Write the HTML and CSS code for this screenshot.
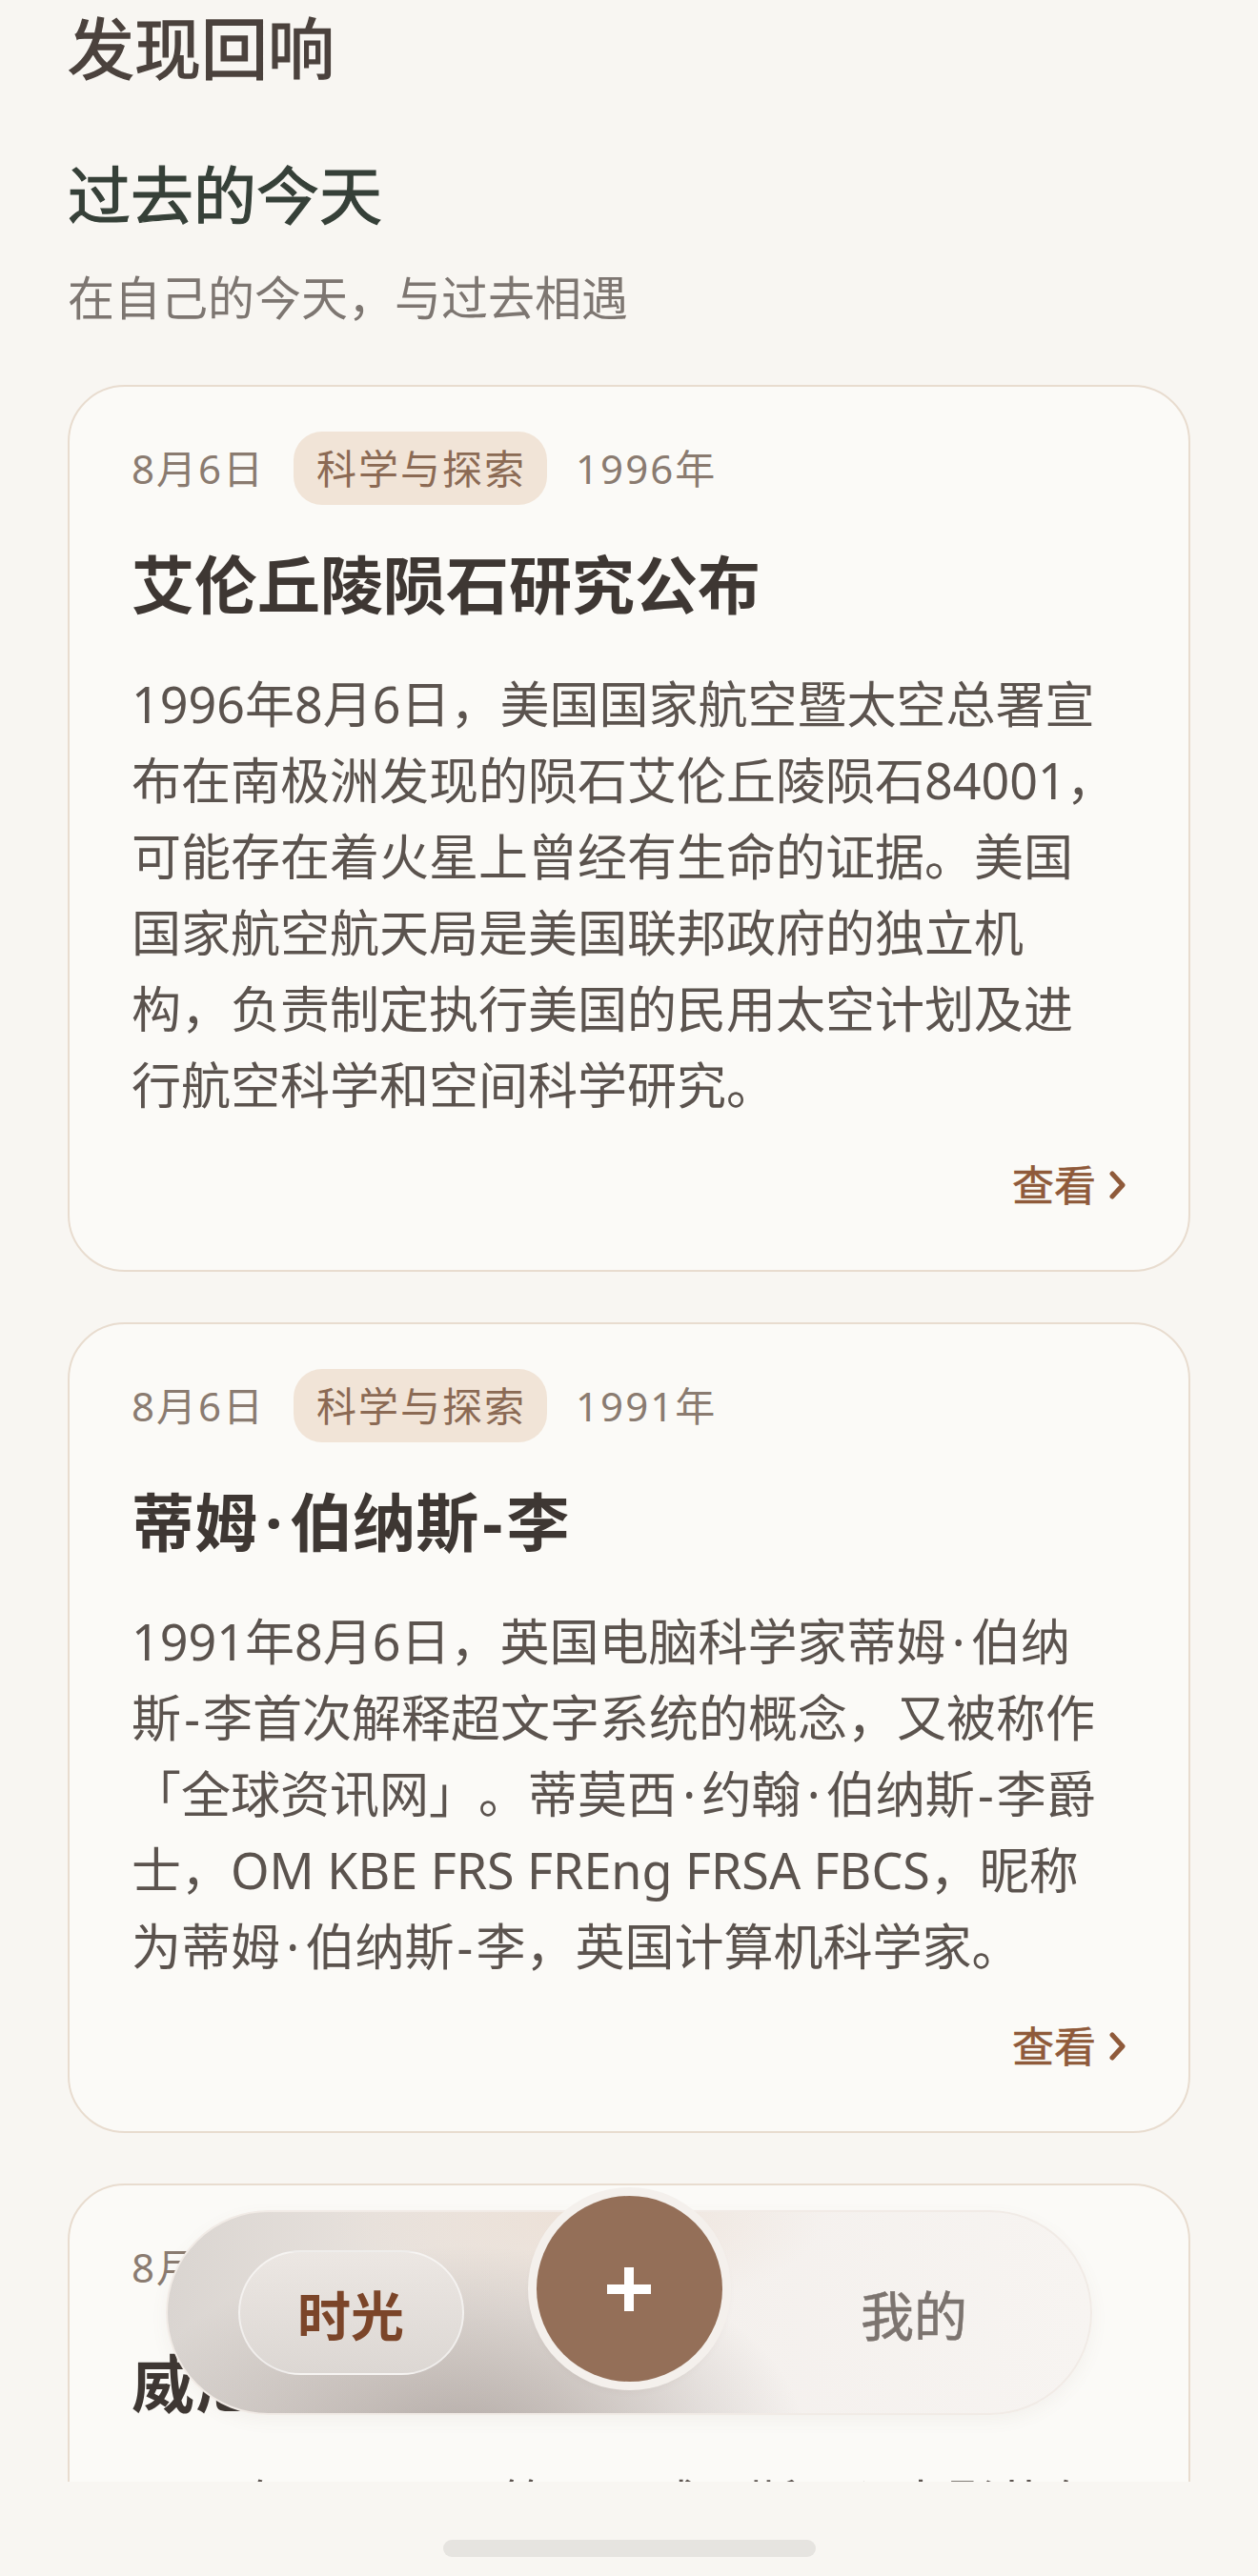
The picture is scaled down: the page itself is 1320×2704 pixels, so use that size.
FILE: index.html
```html
<!DOCTYPE html>
<html lang="zh-CN">
<head>
    <meta charset="UTF-8">
    <meta name="viewport" content="width=device-width, initial-scale=1.0">
    <title>发现回响</title>
    <link rel="stylesheet" href="styles.css">
</head>
<body>
    <div class="screen">
        <h1 class="page-title">发现回响</h1>
        <h2 class="section-title">过去的今天</h2>
        <p class="section-sub">在自己的今天，与过去相遇</p>

        <div class="card-list">
            <div class="card">
                <div class="card-meta">
                    <span>8月6日</span>
                    <span class="tag">科学与探索</span>
                    <span>1996年</span>
                </div>
                <h3 class="card-title">艾伦丘陵陨石研究公布</h3>
                <p class="card-text">1996年8月6日，美国国家航空暨太空总署宣<br>布在南极洲发现的陨石艾伦丘陵陨石84001，<br>可能存在着火星上曾经有生命的证据。美国<br>国家航空航天局是美国联邦政府的独立机<br>构，负责制定执行美国的民用太空计划及进<br>行航空科学和空间科学研究。</p>
                <div class="card-more">
                    <span>查看</span>
                    <svg width="18" height="30" viewBox="0 0 18 30"><polyline points="3,3 14,15 3,27" fill="none" stroke="#8f5a3a" stroke-width="5" stroke-linecap="round" stroke-linejoin="round"/></svg>
                </div>
            </div>

            <div class="card">
                <div class="card-meta">
                    <span>8月6日</span>
                    <span class="tag">科学与探索</span>
                    <span>1991年</span>
                </div>
                <h3 class="card-title">蒂姆<span class="dot">·</span>伯纳斯<span class="dash">-</span>李</h3>
                <p class="card-text">1991年8月6日，英国电脑科学家蒂姆<span class="dot">·</span>伯纳<br>斯<span class="dash">-</span>李首次解释超文字系统的概念，又被称作<br>「全球资讯网」。蒂莫西<span class="dot">·</span>约翰<span class="dot">·</span>伯纳斯<span class="dash">-</span>李爵<br>士，OM KBE FRS FREng FRSA FBCS，昵称<br>为蒂姆<span class="dot">·</span>伯纳斯<span class="dash">-</span>李，英国计算机科学家。</p>
                <div class="card-more">
                    <span>查看</span>
                    <svg width="18" height="30" viewBox="0 0 18 30"><polyline points="3,3 14,15 3,27" fill="none" stroke="#8f5a3a" stroke-width="5" stroke-linecap="round" stroke-linejoin="round"/></svg>
                </div>
            </div>

            <div class="card">
                <div class="card-meta">
                    <span>8月6日</span>
                    <span class="tag">文化与艺术</span>
                    <span>1932年</span>
                </div>
                <h3 class="card-title">威尼斯电影节开幕</h3>
                <p class="card-text">1932年8月6日，第一届威尼斯国际电影节在意<br>大利威尼斯丽都岛开幕，是世界上历史最悠久的<br>国际电影节。</p>
            </div>
        </div>
    </div>

    <div class="home-area">
        <div class="home-indicator"></div>
    </div>

    <nav class="tabbar">
        <div class="tab-slot">
            <span class="tab-pill">时光</span>
        </div>
        <div class="add-btn">
            <svg width="46" height="46" viewBox="0 0 46 46"><rect x="18" y="0" width="10" height="46" fill="#fff"/><rect x="0" y="18" width="46" height="10" fill="#fff"/></svg>
        </div>
        <div class="tab-slot right">
            <span class="tab-text">我的</span>
        </div>
    </nav>
</body>
</html>
```

FILE: styles.css
```css
*{
    box-sizing: border-box;
}
html, body{
    margin: 0;
    height: 100%;
}
body{
    background: #f8f6f2;
    font-family: "Noto Sans", "Noto Sans CJK SC", sans-serif;
    color: #5b534e;
    display: flex;
    flex-direction: column;
    text-spacing-trim: space-all;
}
.screen{
    flex: 1;
    min-height: 0;
    overflow: hidden;
    padding: 2px 71px 0;
}
.page-title{
    margin: 0;
    font-size: 70px;
    line-height: 98px;
    font-weight: 400;
    -webkit-text-stroke: 1.4px #4b423d;
    color: #4b423d;
}
.section-title{
    margin: 58px 0 0;
    font-size: 66px;
    line-height: 92px;
    font-weight: 400;
    -webkit-text-stroke: 1.2px #364038;
    color: #364038;
}
.section-sub{
    margin: 29px 0 0;
    font-size: 49px;
    line-height: 67px;
    color: #7d7671;
}
.card-list{
    margin-top: 58px;
    display: flex;
    flex-direction: column;
    gap: 53px;
}
.card{
    background: #fbfaf7;
    border: 2px solid #e8dccf;
    border-radius: 60px;
    padding: 47px 65px 59px;
}
.card-meta{
    display: flex;
    align-items: center;
    gap: 30px;
    font-size: 42px;
    line-height: 59px;
    letter-spacing: 2px;
    color: #8a7b70;
}
.tag{
    background: #f1e4d7;
    color: #8b6a54;
    padding: 9px 22px 9px 24px;
    border-radius: 30px;
}
.card-title{
    margin: 37px 0 0;
    font-size: 66px;
    line-height: 92px;
    font-weight: 700;
    color: #3e3733;
}
.card-text{
    margin: 40px 0 0;
    font-size: 52px;
    line-height: 80px;
    color: #5b534e;
}
.dot{
    margin: 0 0.12em;
}
.dash{
    margin: 0 0.06em;
}
.card-more{
    margin-top: 35px;
    display: flex;
    justify-content: flex-end;
    align-items: center;
    gap: 14px;
    font-size: 44px;
    line-height: 60px;
    -webkit-text-stroke: 0.6px #8f5a3a;
    color: #8f5a3a;
}
.home-area{
    height: 99px;
    flex-shrink: 0;
    display: flex;
    justify-content: center;
    padding-top: 61px;
}
.home-indicator{
    width: 391px;
    height: 18px;
    border-radius: 9px;
    background: #e6e4e0;
}
.tabbar{
    position: fixed;
    left: 50%;
    bottom: 169px;
    width: 972px;
    margin-left: -486px;
    height: 215px;
    border-radius: 108px;
    border: 2px solid #f1ebe6;
    background:
        radial-gradient(ellipse 360px 210px at 310px 245px, rgba(150,140,136,0.65), rgba(150,140,136,0) 100%),
        radial-gradient(ellipse 260px 110px at 430px 0px, rgba(236,224,214,0.9), rgba(236,224,214,0) 100%),
        linear-gradient(90deg, #dad5d1 0%, #e7e1dc 22%, #ede7e2 42%, #f4f0ed 58%, #f7f4f1 100%);
    box-shadow: 0 6px 18px rgba(120,100,90,0.06);
    display: grid;
    grid-template-columns: 1fr 200px 1fr;
    align-items: center;
}
.tab-slot{
    display: flex;
    justify-content: center;
}
.tab-slot.right{
    padding-left: 14px;
}
.tab-pill{
    width: 237px;
    height: 131px;
    border-radius: 66px;
    border: 2px solid rgba(255,255,255,0.55);
    background: linear-gradient(180deg, #ece7e3, #dcd7d3);
    display: flex;
    align-items: center;
    justify-content: center;
    font-size: 56px;
    font-weight: 700;
    color: #7b4529;
}
.tab-text{
    font-size: 56px;
    -webkit-text-stroke: 0.6px #7c746f;
    color: #7c746f;
}
.add-btn{
    justify-self: center;
    align-self: start;
    margin-top: -17px;
    width: 195px;
    height: 195px;
    border-radius: 50%;
    background: #946f58;
    box-shadow: 0 0 0 9px #f4f0ec, 0 4px 14px rgba(90,60,40,0.12);
    display: flex;
    align-items: center;
    justify-content: center;
}
```
